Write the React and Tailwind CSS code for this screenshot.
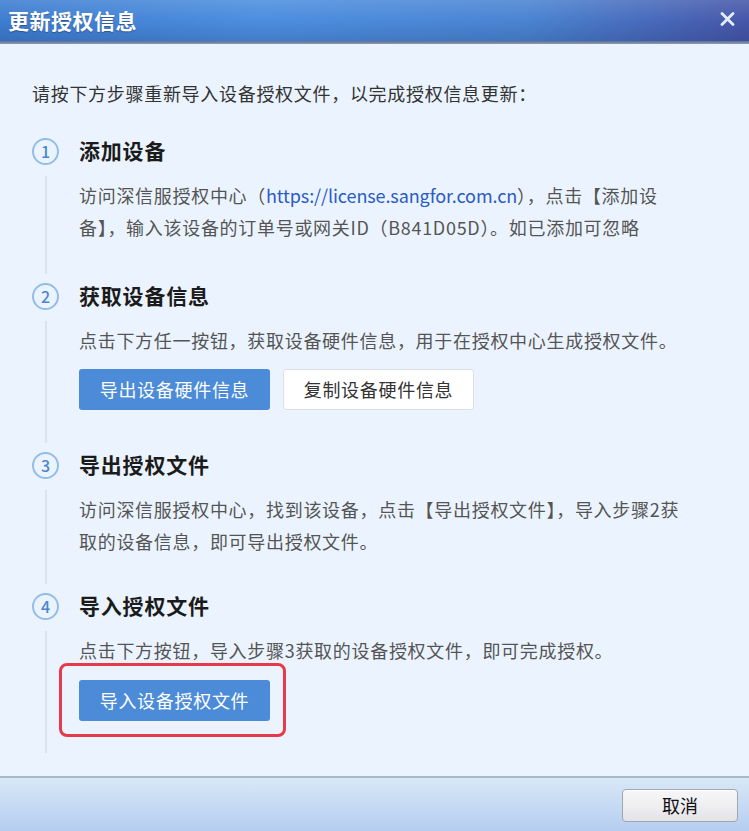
import React from "react";

const font = { fontFamily: '"Noto Sans CJK SC", "Noto Sans", sans-serif' };

function Circle({ n }) {
  return (
    <div className="flex h-[27px] w-[27px] items-center justify-center rounded-full border-2 border-[#93bde9] text-[16px] font-medium leading-none text-[#4a86cf]">
      {n}
    </div>
  );
}

function Step({ n, title, children, pb = "pb-[36px]" }) {
  return (
    <div className="grid grid-cols-[27px_1fr] gap-x-5">
      <div className="flex h-[28px] items-center">
        <Circle n={n} />
      </div>
      <div className="flex h-[28px] items-center text-[21px] font-bold tracking-[0.8px] text-[#1b1b1b]">
        {title}
      </div>
      <div className="mb-[8px] mt-[11px] flex justify-center">
        <div className="w-[2px] bg-[#dde3ea]" />
      </div>
      <div className={`pt-[14px] ${pb}`}>{children}</div>
    </div>
  );
}

function Desc({ children }) {
  return (
    <p className="text-[18px] leading-[32px] tracking-[0.7px] text-[#555]">{children}</p>
  );
}

function PrimaryBtn({ children, className = "" }) {
  return (
    <button className={`h-[41px] w-[191px] rounded-[3px] bg-[#4b8bd7] text-[18px] tracking-[0.7px] text-white ${className}`}>
      {children}
    </button>
  );
}

export default function App() {
  return (
    <div style={font} className="flex h-[831px] w-[749px] flex-col overflow-hidden bg-[#ebf4fe]">
      {/* title bar */}
      <div className="relative h-[41px] shrink-0 bg-[linear-gradient(90deg,#3e7dd0_0%,#4c8edf_35%,#4a84d2_70%,#4656a8_100%)]">
        <div className="absolute inset-0 bg-[linear-gradient(180deg,rgba(255,255,255,0.12)_0%,rgba(255,255,255,0)_50%,rgba(0,0,40,0.12)_100%)]" />
        <div className="relative flex h-full items-center justify-between pl-[8px] pr-[14px]">
          <span className="text-[21px] font-bold tracking-[0.5px] text-white [text-shadow:0_1px_1px_rgba(0,0,0,0.3)]">
            更新授权信息
          </span>
          <svg width="15" height="14" viewBox="0 0 15 14" className="mt-[-4px]">
            <path d="M2 1.5 L13 12.5 M13 1.5 L2 12.5" stroke="#e6ecf8" strokeWidth="2.8" strokeLinecap="round" />
          </svg>
        </div>
      </div>
      <div className="h-[3px] shrink-0 bg-[linear-gradient(180deg,#5d6f90,#8c9cb8)]" />

      {/* body */}
      <div className="flex-1 pl-8 pr-[58px] pt-[33px]">
        <p className="text-[18px] leading-[32px] tracking-[0.7px] text-[#333]">
          请按下方步骤重新导入设备授权文件，以完成授权信息更新：
        </p>
        <div className="mt-[28px]">
          <Step n="1" title="添加设备" pb="pb-[39px]">
            <Desc>
              访问深信服授权中心（
              <span className="tracking-[-0.1px] text-[#2a5ac6]">https://license.sangfor.com.cn</span>
              ），点击【添加设备】，输入该设备的订单号或网关ID（B841D05D）。如已添加可忽略
            </Desc>
          </Step>
          <Step n="2" title="获取设备信息" pb="pb-[41px]">
            <Desc>点击下方任一按钮，获取设备硬件信息，用于在授权中心生成授权文件。</Desc>
            <div className="mt-[13px] flex gap-[13px]">
              <PrimaryBtn>导出设备硬件信息</PrimaryBtn>
              <button className="h-[41px] w-[191px] rounded-[3px] border border-[#dcdfe4] bg-white text-[18px] tracking-[0.7px] text-[#333]">
                复制设备硬件信息
              </button>
            </div>
          </Step>
          <Step n="3" title="导出授权文件" pb="pb-[35px]">
            <Desc>
              访问深信服授权中心，找到该设备，点击【导出授权文件】，导入步骤2获取的设备信息，即可导出授权文件。
            </Desc>
          </Step>
          <Step n="4" title="导入授权文件" pb="pb-[40px]">
            <Desc>点击下方按钮，导入步骤3获取的设备授权文件，即可完成授权。</Desc>
            <div className="relative mt-[14px] w-[191px]">
              <PrimaryBtn>导入设备授权文件</PrimaryBtn>
              <div className="pointer-events-none absolute bottom-[-16px] left-[-20px] right-[-16px] top-[-17px] rounded-[8px] border-[3px] border-[#e8394a]" />
            </div>
          </Step>
        </div>
      </div>

      {/* footer */}
      <div className="h-[2px] shrink-0 bg-[#a9b8c9]" />
      <div className="flex h-[53px] shrink-0 items-center justify-end bg-[linear-gradient(180deg,#d7e8f6,#b5cdf0)] pr-[11px]">
        <button className="mt-[1px] h-[33px] w-[116px] rounded-[4px] border border-[#a3a6ad] bg-[linear-gradient(180deg,#f7f7f9_0%,#efeff2_50%,#e3e3e8_100%)] text-[18px] text-[#111] shadow-[inset_0_1px_0_#fff]">
          取消
        </button>
      </div>
    </div>
  );
}
